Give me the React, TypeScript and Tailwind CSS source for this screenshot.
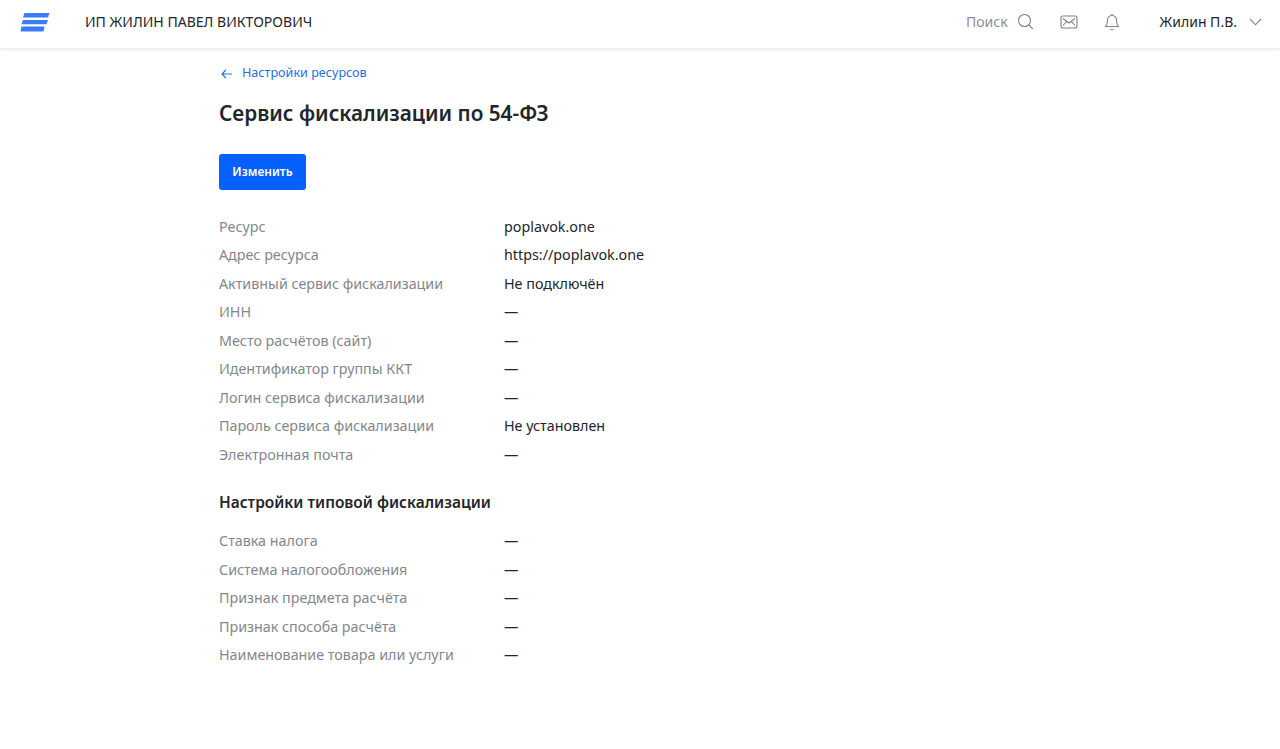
const mainRows = [
  ['Ресурс', 'poplavok.one'],
  ['Адрес ресурса', 'https://poplavok.one'],
  ['Активный сервис фискализации', 'Не подключён'],
  ['ИНН', '—'],
  ['Место расчётов (сайт)', '—'],
  ['Идентификатор группы ККТ', '—'],
  ['Логин сервиса фискализации', '—'],
  ['Пароль сервиса фискализации', 'Не установлен'],
  ['Электронная почта', '—'],
];

const taxRows = [
  ['Ставка налога', '—'],
  ['Система налогообложения', '—'],
  ['Признак предмета расчёта', '—'],
  ['Признак способа расчёта', '—'],
  ['Наименование товара или услуги', '—'],
];

function Rows({ rows }: { rows: string[][] }) {
  return (
    <div className="flex flex-col">
      {rows.map(([label, value]) => (
        <div key={label} className="flex h-[28.5px] items-center text-[14.3px]">
          <span className="w-[285px] shrink-0 text-[#83878d]">{label}</span>
          <span className="text-[#22252b]">{value}</span>
        </div>
      ))}
    </div>
  );
}

export default function App() {
  return (
    <div className="min-h-[749px] bg-white font-['Noto_Sans',sans-serif]">
      <header className="flex h-[48px] items-center bg-white pb-[5px] pl-[20px] pr-[18px] shadow-[0_1px_4px_rgba(0,0,0,0.12)]">
        <svg width="30" height="20" viewBox="0 0 30 20" fill="#3b7df0">
          <path d="M4.5 1H29.5L28 5.6H3Z" />
          <path d="M3 8H28L26.5 12.2H1.5Z" />
          <path d="M1.5 14.6H24.5L23.5 19.4H0.5Z" />
        </svg>
        <span className="ml-[35px] text-[14.05px] text-[#22252b]">ИП ЖИЛИН ПАВЕЛ ВИКТОРОВИЧ</span>
        <div className="ml-auto flex items-center">
          <span className="text-[14px] text-[#8b9096]">Поиск</span>
          <svg className="ml-[9px]" width="17" height="17" viewBox="0 0 17 17" fill="none" stroke="#7d8288" strokeWidth="1.1">
            <circle cx="7.5" cy="7.5" r="6" />
            <path d="M12 12L15.8 15.8" />
          </svg>
          <svg className="ml-[26px]" width="18" height="14" viewBox="0 0 18 14" fill="none" stroke="#7d8288" strokeWidth="1.1">
            <rect x="1" y="1" width="16" height="12" rx="2" />
            <path d="M3 3.5L9 8L15 3.5M3 10.5L6.5 6.5M15 10.5L11.5 6.5" />
          </svg>
          <svg className="ml-[26px]" width="16" height="18" viewBox="0 0 16 18" fill="none" stroke="#7d8288" strokeWidth="1.1">
            <path d="M8 0.5V2.3M1.5 13.5C2.8 12 3.4 10.5 3.4 8C3.4 4.5 5.2 2.5 8 2.5C10.8 2.5 12.6 4.5 12.6 8C12.6 10.5 13.2 12 14.5 13.5Z" />
            <path d="M6.3 16C7 17 9 17 9.7 16" />
          </svg>
          <span className="ml-[40px] text-[14px] text-[#22252b]">Жилин П.В.</span>
          <svg className="ml-[12px]" width="13" height="8" viewBox="0 0 13 8" fill="none" stroke="#7d8288" strokeWidth="1.1">
            <path d="M1 1L6.5 6.8L12 1" />
          </svg>
        </div>
      </header>

      <main className="ml-[219px] flex flex-col items-start">
        <a className="mt-[17px] flex h-[17px] items-center text-[12.6px] text-[#1f6fe0]">
          <svg width="12" height="10" viewBox="0 0 12 10" fill="none" stroke="#1f6fe0" strokeWidth="1.1" className="ml-[2px]">
            <path d="M11 5H1M4.8 1L1 5L4.8 9" />
          </svg>
          <span className="ml-[9px]">Настройки ресурсов</span>
        </a>
        <h1 className="mt-[16px] text-[20.75px] leading-[30px] font-semibold text-[#22252b]">Сервис фискализации по 54-ФЗ</h1>
        <button className="mt-[26px] h-[36px] w-[87px] rounded-[3px] bg-[#0561fc] text-[12px] font-semibold text-white">Изменить</button>
        <div className="mt-[22.4px]">
          <Rows rows={mainRows} />
        </div>
        <h2 className="mt-[22.6px] text-[15.45px] leading-[22px] font-semibold text-[#22252b]">Настройки типовой фискализации</h2>
        <div className="mt-[13px]">
          <Rows rows={taxRows} />
        </div>
      </main>
    </div>
  );
}
